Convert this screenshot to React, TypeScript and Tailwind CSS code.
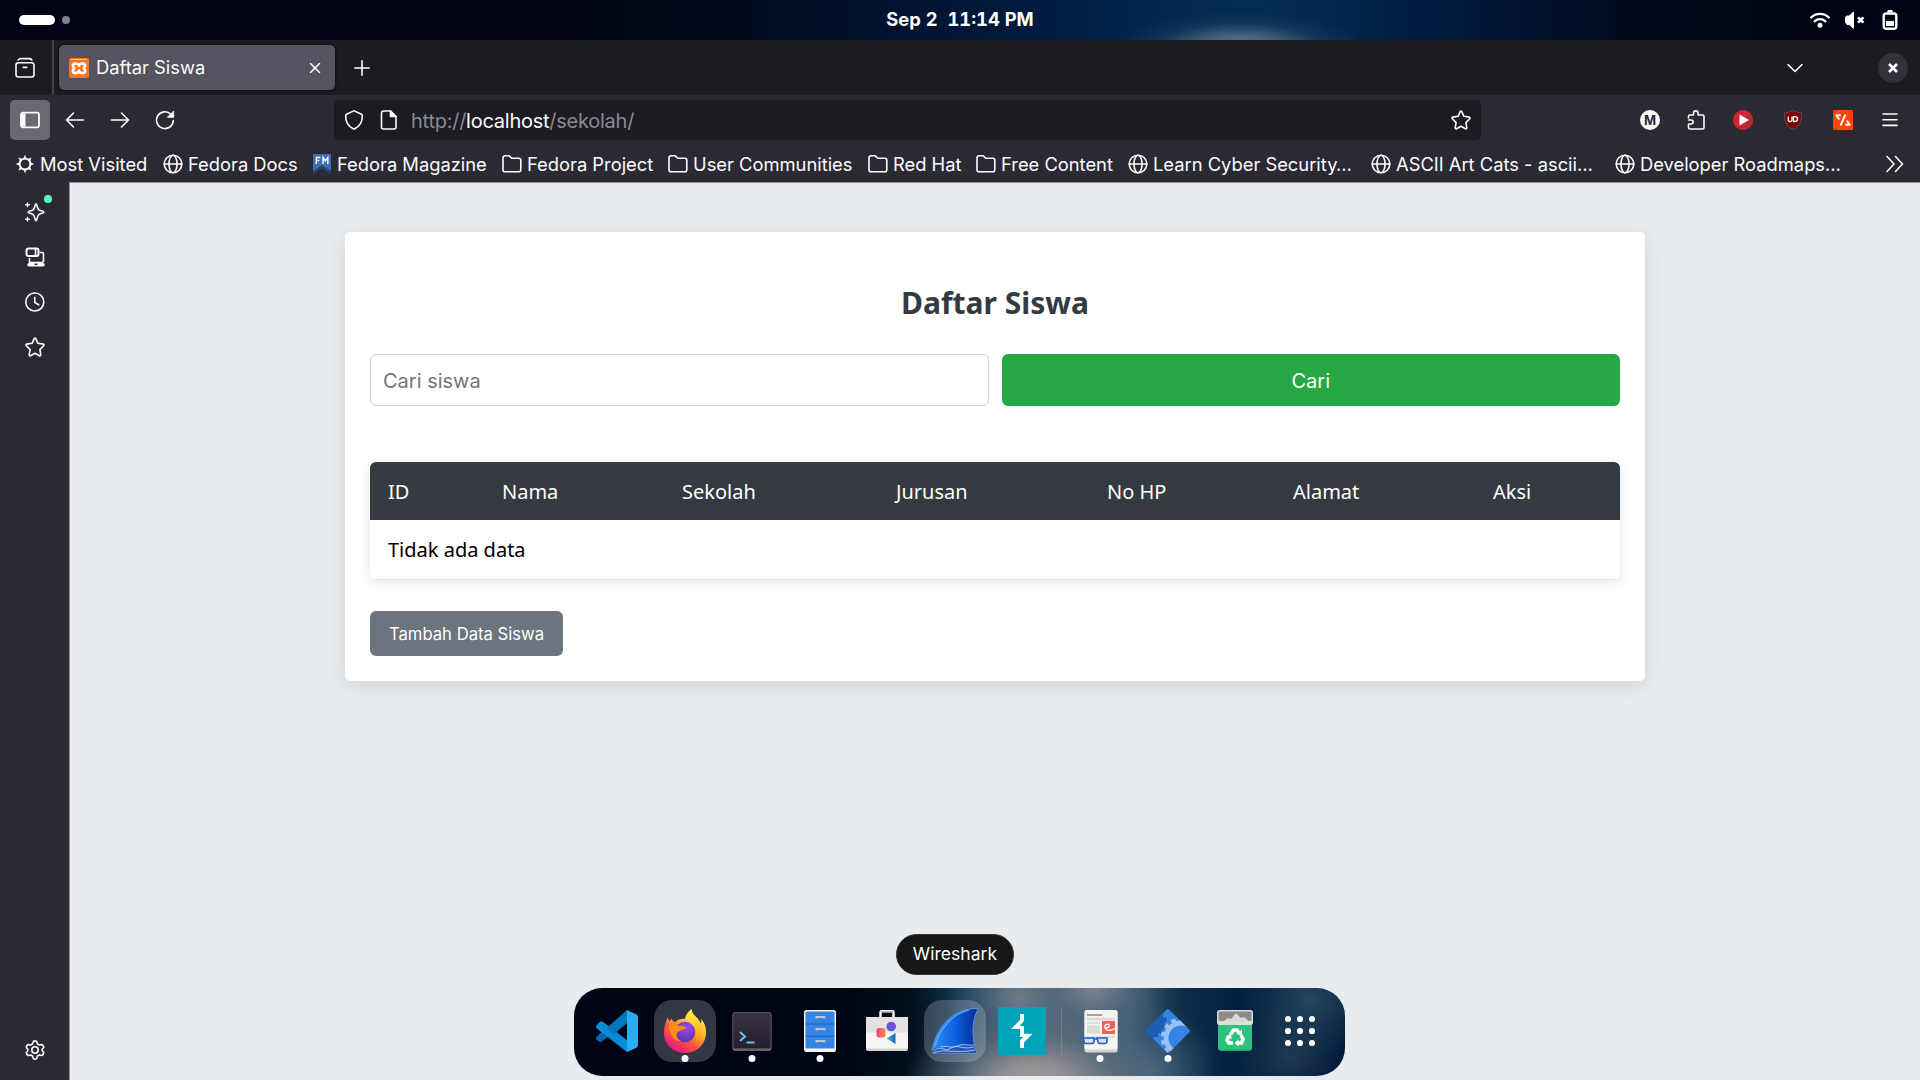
import React from "react";

type P = { children?: React.ReactNode; className?: string; vb?: string };

function Svg({ children, className = "size-5", vb = "0 0 20 20" }: P) {
  return (
    <svg viewBox={vb} className={"block shrink-0 overflow-visible " + className} fill="none" stroke="currentColor" strokeWidth="1.6" strokeLinecap="round" strokeLinejoin="round">
      {children}
    </svg>
  );
}

const starPath = "M9.2 1.7Q10 .4 10.8 1.700L12.900 6.300 18.200 7.100Q19.500 7.600 18.700 8.700L14.900 12.600 15.800 17.700Q15.700 19.200 14.400 18.700L10 16.300 5.600 18.700Q4.300 19.200 4.200 17.700L5.100 12.600 1.300 8.700Q.5 7.600 1.800 7.100L7.100 6.300Z";

const Globe = () => (
  <Svg className="size-5">
    <circle cx="10" cy="10" r="8.8" />
    <ellipse cx="10" cy="10" rx="4" ry="8.8" />
    <path d="M1.2 10h17.6" />
  </Svg>
);
const Folder = () => (
  <Svg className="size-5">
    <path d="M3 1.8h4.2l2.4 2.4h7.2a2 2 0 0 1 2 2v9.6a2 2 0 0 1-2 2H3a2 2 0 0 1-2-2V3.8a2 2 0 0 1 2-2z" />
  </Svg>
);
const Burst = () => (
  <Svg className="size-5">
    <circle cx="10" cy="10" r="5.4" strokeWidth="1.900" />
    {[0, 45, 90, 135, 180, 225, 270, 315].map((a) => (
      <path key={a} d="M8.700 4.500 10 1.400l1.300 3.100z" fill="currentColor" strokeWidth=".6" transform={`rotate(${a} 10 10)`} />
    ))}
  </Svg>
);
const Magazine = () => (
  <svg viewBox="0 0 20 20" className="block size-5 shrink-0">
    <path d="M1 0h18v20l-9-6-9 6z" fill="#3c6eb4" />
    <path d="M1 20V17L10 11l9 6v3l-9-6z" fill="#294172" />
    <path d="M4.300 10V3.500h4M4.300 6.500h3M11 10V3.500l2.400 3.500 2.400-3.500V10" fill="none" stroke="#fff" strokeWidth="1.400" />
  </svg>
);

const bookmarks = [
  { t: "Most Visited", I: Burst, w: "w-[148px]" },
  { t: "Fedora Docs", I: Globe, w: "w-[149px]" },
  { t: "Fedora Magazine", I: Magazine, w: "w-[190px]" },
  { t: "Fedora Project", I: Folder, w: "w-[166px]" },
  { t: "User Communities", I: Folder, w: "w-[200px]" },
  { t: "Red Hat", I: Folder, w: "w-[108px]" },
  { t: "Free Content", I: Folder, w: "w-[152px]" },
  { t: "Learn Cyber Security…", I: Globe, w: "w-[243px]" },
  { t: "ASCII Art Cats - ascii…", I: Globe, w: "w-[244px]" },
  { t: "Developer Roadmaps…", I: Globe, w: "w-[268px]" },
];

function SystemBar() {
  return (
    <div className="grid h-10 grid-cols-3 items-center bg-[radial-gradient(ellipse_125px_34px_at_1240px_46px,#5a7590_0%,#46627e_30%,#1e426480_65%,#032d5200_100%),linear-gradient(90deg,#000414_0%,#000414_30%,#000a1d_38%,#001637_50%,#00244a_59%,#032d52_65%,#00264a_70%,#001637_77%,#000a1d_85%,#000414_94%)] text-white">
      <div className="flex items-center gap-[7px] pl-[19px]">
        <div className="h-2.5 w-9 rounded-full bg-white" />
        <div className="size-2 rounded-full bg-[#80828a]" />
      </div>
      <div className="-mt-0.5 whitespace-pre text-center text-[18.33px] font-bold tabular-nums leading-[38px]">Sep 2  11:14 PM</div>
      <div className="flex items-center justify-end gap-[15px] pr-5">
        <Svg>
          <path d="M1.2 7.5a12.7 12.7 0 0 1 17.6 0M4.6 11.3a7.8 7.8 0 0 1 10.8 0" strokeWidth="2.3" />
          <circle cx="10" cy="15.3" r="2.5" fill="currentColor" stroke="none" />
        </Svg>
        <Svg>
          <path d="M2 6h2.200L8.500 2v16.500l-4.300-4H2L.5 12.500v-5z" fill="currentColor" strokeWidth="1" />
          <path d="m13 7.300 5.400 5.400m0-5.400-5.400 5.400" strokeWidth="2.600" strokeLinecap="butt" />
        </Svg>
        <Svg>
          <rect x="3.700" y="3.500" width="12.600" height="15.300" rx="2.500" strokeWidth="2.400" />
          <path d="M8.500 1.200h3" strokeWidth="2.400" />
          <rect x="6" y="11" width="8" height="5" fill="currentColor" stroke="none" />
        </Svg>
      </div>
    </div>
  );
}

function TabBar() {
  return (
    <div className="flex h-[55px] items-center bg-[#1c1b22]">
      <div className="flex h-full w-[54px] items-center border-r-2 border-[#44434b] pl-[15px]">
        <Svg>
          <rect x="1" y="4.700" width="18" height="14.300" rx="2.400" />
          <path d="M3.300 1.900C3.800 1 4.500.700 5.500.700h9c1 0 1.700.3 2.200 1.200M8.300 9.300h3.400" strokeWidth="1.800" />
        </Svg>
      </div>
      <div className="ml-[5px] flex h-[45px] w-[276px] items-center rounded-[5px] bg-[#55535f] pl-2.5 pr-[14px] shadow-[0_0_3px_#000]">
        <svg viewBox="0 0 20 20" className="size-5">
          <rect width="20" height="20" rx="2" fill="#f37623" />
          <path d="M2 1.500h16" stroke="#fbbf8c" strokeWidth="1" />
          <g fill="none" stroke="#fff" strokeWidth="2.600" strokeLinejoin="round" strokeLinecap="round">
            <path d="M10 7.600C9 4.800 3.800 4.600 3.800 7.600c0 1.400 1.500 2 1.500 2.600s-1.500 1.300-1.500 2.700c0 3.200 5.200 2.700 6.200-.1 1 2.800 6.200 3.300 6.200.1 0-1.400-1.500-2.100-1.500-2.700s1.500-1.200 1.500-2.600c0-3-5.200-2.800-6.200 0z" />
          </g>
        </svg>
        <span className="ml-[7px] flex-1 text-[18.33px] text-[#fbfbfe]">Daftar Siswa</span>
        <Svg className="size-3 text-[#fbfbfe]" vb="0 0 12 12">
          <path d="m1.500 1.500 9 9m0-9-9 9" />
        </Svg>
      </div>
      <Svg className="ml-[19px] mt-px size-4 text-[#fbfbfe]" vb="0 0 16 16">
        <path d="M8 .800v14.400M.800 8h14.400" />
      </Svg>
      <div className="flex-1" />
      <Svg className="mr-[75px] size-4" vb="0 0 16 16">
        <path d="m1 4.500 7 7 7-7" />
      </Svg>
      <div className="mr-[12px] flex size-[30px] items-center justify-center rounded-full bg-[#33323a]">
        <Svg className="size-[10px] text-white" vb="0 0 10 10">
          <path d="m1 1 8 8m0-8-8 8" strokeWidth="2.700" strokeLinecap="butt" />
        </Svg>
      </div>
    </div>
  );
}

function Toolbar() {
  return (
    <div className="flex h-[50px] items-center pl-2.5 pr-5">
      <div className="flex size-10 items-center justify-center rounded-[5px] bg-[#6a6972]">
        <Svg>
          <rect x="1" y="2.700" width="18" height="14.600" rx="2" strokeWidth="1.800" />
          <path d="M1 3.500h4.500v13H1z" fill="currentColor" stroke="none" />
        </Svg>
      </div>
      <Svg className="ml-[15px] size-5">
        <path d="M18.500 10H1.500M8.500 3l-7 7 7 7" />
      </Svg>
      <Svg className="ml-[25px] size-5">
        <path d="M1.500 10h17M11.500 3l7 7-7 7" />
      </Svg>
      <Svg className="ml-[25px] size-5">
        <path d="M18.300 10.500A8.400 8.400 0 1 1 15.800 4.200" />
        <path d="M18.600 1.500v5.700h-5.700z" fill="currentColor" strokeWidth="1" />
      </Svg>
      <div className="ml-[159px] flex h-10 w-[1147px] items-center rounded-[5px] bg-[#1c1b22] px-2.5">
        <Svg>
          <path d="M9.200 1.100Q10 .700 10.800 1.100L17.400 4.300Q18.200 4.700 18.300 5.600C18.500 11.500 16 16 10.800 18.700Q10 19.200 9.200 18.700C4 16 1.500 11.500 1.700 5.600Q1.800 4.700 2.600 4.300Z" />
        </Svg>
        <Svg className="ml-[15px] size-5">
          <path d="M4.500 1h7L17 6.500v10.500a2 2 0 0 1-2 2H4.500a2 2 0 0 1-2-2V3a2 2 0 0 1 2-2z" />
          <path d="M11.500 1v5.500H17z" fill="currentColor" />
        </Svg>
        <div className="ml-3 mt-px flex-1 text-[20px] tracking-[-0.25px] text-[#8b8a91]">
          http://<span className="text-[#fbfbfe]">localhost</span>/sekolah/
        </div>
        <Svg>
          <path d={starPath} />
        </Svg>
      </div>
      <div className="flex-1" />
      <div className="mr-[26px] flex size-5 items-center justify-center rounded-full bg-[#fbfbfe] text-[13px] font-bold leading-none text-[#2b2a33]">M</div>
      <Svg className="mr-[27px] size-5">
        <path d="M2.500 8V6.500A1.500 1.500 0 0 1 4 5h3.500V3.200a2.300 2.300 0 0 1 4.600 0V5h4.400A1.500 1.500 0 0 1 18 6.500v11a1.500 1.500 0 0 1-1.500 1.500H4a1.500 1.500 0 0 1-1.500-1.500V14h2.600a2 2 0 0 0 0-4H2.500" />
      </Svg>
      <svg viewBox="0 0 20 20" className="mr-[30px] size-5">
        <circle cx="10" cy="10" r="10" fill="#d92231" />
        <path d="M3 17a10 10 0 0 0 14-14z" fill="#b8262f" />
        <path d="M6.500 4.500v11L16 10z" fill="#fff" />
      </svg>
      <svg viewBox="0 0 20 20" className="mr-[30px] size-5">
        <path d="M10 .5c3 1.700 5.500 2.200 8.500 2.300 0 8-.5 12.200-8.500 16.700C2 15 1.500 10.800 1.500 2.800 4.500 2.700 7 2.200 10 .5z" fill="#800000" stroke="#68636c" strokeWidth=".7" />
        <path d="M5.200 6.500v3.300c0 2.400 3.800 2.400 3.800 0V6.500M9 9.800" fill="none" stroke="#fff" strokeWidth="1.300" />
        <path d="M10.500 6.700h1.500c3.400 0 3.400 4.800 0 4.800h-1.500z" fill="none" stroke="#fff" strokeWidth="1.300" />
      </svg>
      <svg viewBox="0 0 20 20" className="mr-[27px] size-5">
        <rect width="20" height="20" rx="1.500" fill="#ff4500" />
        <path d="M7.800 5.200H3.200l3.100 4.300M12.500 4.500 7.500 15.500M12.200 14.800h4.600l-3.100-4.300" fill="none" stroke="#fff" strokeWidth="1.900" strokeLinejoin="round" />
      </svg>
      <Svg className="size-5">
        <path d="M3 4h14M3 9.700h14M3 15.400h14" />
      </Svg>
    </div>
  );
}

function Bookmarks() {
  return (
    <div className="flex h-[37px] items-center pl-[15px]">
      {bookmarks.map(({ t, I, w }) => (
        <div key={t} className={"flex shrink-0 items-center gap-[5px] whitespace-nowrap text-[18.33px] leading-6 " + w}>
          <I />
          <span>{t}</span>
        </div>
      ))}
      <Svg className="ml-[2px] size-5">
        <path d="m2 2.500 7 7.500-7 7.500M10.500 2.500l7 7.500-7 7.500" />
      </Svg>
    </div>
  );
}

function Sidebar() {
  return (
    <aside className="flex w-[69px] flex-col items-center gap-[25px] bg-[#2b2a33] pb-5 pt-5">
      <div className="relative">
        <Svg>
          <path d="M11 1.800c1.200 0 1.100 5.200 3 6.200 4 1.500 4.800 1.300 4.800 2.200s-.8.700-4.800 2.200c-1.900 1-1.800 6.200-3 6.200s-1.100-5.200-3-6.200c-4-1.500-4.800-1.300-4.800-2.200s.8-.700 4.800-2.200c1.900-1 1.800-6.200 3-6.200z" />
          <path d="M2.500 .9v3.600M.7 2.700h3.600M2.500 15.500v3.600M.7 17.300h3.600" strokeWidth="1.400" />
        </Svg>
        <div className="absolute -top-[7px] left-[19px] size-2 rounded-full bg-[#54ffbd]" />
      </div>
      <Svg>
        <rect x="1.500" y="1.500" width="12" height="7.500" rx="2" strokeWidth="2" />
        <path d="M10.500 2v7M15.500 5.500H17a1.500 1.500 0 0 1 1.500 1.500v7l-1 1.500M4.500 11.500v4h13" />
        <path d="M4 17.800h14" strokeWidth="3.500" />
        <path d="M9.500 17.300h3" stroke="#2b2a33" strokeWidth="1.500" strokeLinecap="butt" />
      </Svg>
      <Svg>
        <circle cx="9.800" cy="10" r="9" />
        <path d="M9.800 5.500v5l3.900 2.300" />
      </Svg>
      <Svg>
        <path d={starPath} />
      </Svg>
      <div className="flex-1" />
      <Svg>
        <circle cx="10" cy="10" r="3.200" />
        <path d="M8.200 1.700Q10 .2 11.800 1.700L12.500 4 14.300 5 16.700 4.500Q18.800 5.400 18.700 7.500L17.200 9.200V10.800L18.700 12.500Q18.800 14.600 16.700 15.500L14.300 15 12.500 16 11.800 18.300Q10 19.800 8.200 18.300L7.500 16 5.700 15 3.300 15.500Q1.200 14.600 1.300 12.500L2.800 10.800V9.200L1.300 7.500Q1.200 5.400 3.300 4.500L5.700 5 7.500 4z" />
      </Svg>
    </aside>
  );
}

function StudentPage() {
  return (
    <main className="flex flex-1 flex-col items-center border-l border-t border-[#8f8f96] bg-[#e8ecef] pt-[49px] font-['Noto_Sans',sans-serif]">
      <section className="h-[449px] w-[1300px] rounded-[5px] bg-white px-[25px] shadow-[0_5px_19px_rgba(0,0,0,0.1)]">
        <h1 className="pt-[50px] text-center text-[30px] font-bold leading-[41px] text-[#343a40]">Daftar Siswa</h1>
        <div className="mt-[31px] grid grid-cols-2 gap-[13px] font-['Inter',sans-serif] text-[20px]">
          <div className="flex h-[52px] items-center rounded-[6px] border border-[#ced4da] px-3 pt-0.5 text-[#757575]">Cari siswa</div>
          <button className="h-[52px] rounded-[6px] bg-[#28a745] pt-0.5 text-white">Cari</button>
        </div>
        <div className="mt-14 overflow-hidden rounded-[6px] text-[20px] shadow-[0_2px_12px_rgba(0,0,0,0.1)]">
          <div className="flex h-[58px] items-center bg-[#343a40] pl-[18px] pt-0.5 text-white">
            <span className="w-[114px]">ID</span>
            <span className="w-[180px]">Nama</span>
            <span className="w-[214px]">Sekolah</span>
            <span className="w-[211px]">Jurusan</span>
            <span className="w-[186px]">No HP</span>
            <span className="w-[200px]">Alamat</span>
            <span>Aksi</span>
          </div>
          <div className="flex h-[60px] items-center border-b border-[#dee2e6] pl-[18px] pt-px text-black">Tidak ada data</div>
        </div>
        <button className="mt-[31px] h-[45px] w-[193px] rounded-[6px] bg-[#6c757d] pt-0.5 font-['Inter',sans-serif] text-[16.67px] text-white">Tambah Data Siswa</button>
      </section>
    </main>
  );
}

const VSCode = () => (
  <svg viewBox="0 0 42 42" className="size-[42px]">
    <path d="M31 0v12L5 32.200 0 29.500c-.6-1-.3-2 .4-2.700z" fill="#0068ae" />
    <path d="M.4 15.500 4.500 11.500h2L31 30v12L.4 18.300c-.8-.8-.8-2 0-2.800z" fill="#0a8ad8" />
    <path d="M31 0 11 19l7 5.500L31 13z" fill="#0076bd" />
    <path d="m31 0 9.500 4.500L42 6v30l-1.500 1.700L31 42z" fill="#29aef5" />
  </svg>
);
const Firefox = () => (
  <svg viewBox="0 0 44 44" className="size-11">
    <defs>
      <linearGradient id="ff1" x1=".8" y1=".1" x2=".25" y2=".95">
        <stop offset="0" stopColor="#fff44f" />
        <stop offset=".35" stopColor="#ffb02e" />
        <stop offset=".65" stopColor="#ff563d" />
        <stop offset="1" stopColor="#e31587" />
      </linearGradient>
      <radialGradient id="ff2" cx=".6" cy=".3" r=".7">
        <stop offset="0" stopColor="#a545ef" />
        <stop offset="1" stopColor="#5539a8" />
      </radialGradient>
      <linearGradient id="ff3" x1="0" y1="0" x2="0" y2="1">
        <stop offset="0" stopColor="#fff44f" />
        <stop offset="1" stopColor="#ff980e" />
      </linearGradient>
    </defs>
    <path d="M5 8c0 2 .5 3 1.500 4L9 9.500c0 2 1 3 3 3.500 3-3 7-4 11-3 1-4 3-7 5.500-9.500.5 5 4 7 6.500 10l3 4c.5-2 .5-3 0-5 4 5 5.500 10 5 15.500C42 37 33 44 22 44 10 44 1 35 1 24c0-6 1.500-11 4-16z" fill="url(#ff1)" />
    <circle cx="22" cy="23" r="10.300" fill="url(#ff2)" />
    <path d="M22 9.500c1-4 3-7 6.500-9.500.5 5 4 7 6.500 10 5 6 5 18-2 23 2-8 0-15-5-19-2-2-4-2-6-4.500z" fill="url(#ff3)" />
    <path d="M6 17c4-3 7-2 10 0 3-.5 6 .5 7 2-2 2-6 2-8 4-3 2-1 7 3 9-6 1-11-5-12-15z" fill="#ff8a18" />
  </svg>
);
const Terminal = () => (
  <svg viewBox="0 0 42 42" className="size-[42px]">
    <defs><linearGradient id="term" x2="0" y2="1"><stop stopColor="#38323f" /><stop offset="1" stopColor="#251e30" /></linearGradient></defs>
    <rect x="1.500" y="2" width="39" height="39" rx="3" fill="#66606a" />
    <rect x="2" y="2.500" width="38" height="36" rx="2.500" fill="url(#term)" stroke="#524c58" />
    <path d="m9 22 5 4.500L9 31M15.500 32.500h8" fill="none" stroke="#5bc8e8" strokeWidth="2" />
  </svg>
);
const Files = () => (
  <svg viewBox="0 0 42 42" className="size-[42px]">
    <rect x="5" y="0" width="32" height="42" rx="2.500" fill="#f6f5f4" />
    <rect x="6.500" y="1.500" width="29" height="37" rx="1" fill="#3584e4" />
    <path d="M6.500 14h29M6.500 26.200h29" stroke="#1c62bd" />
    <path d="M17.500 8.500V7h8v1.500M17.500 20.500V19h8v1.500M17.500 32.500V31h8v1.500" stroke="#c0c6ce" strokeWidth="2" fill="none" />
  </svg>
);
const Software = () => (
  <svg viewBox="0 0 42 42" className="size-[42px]">
    <defs>
      <linearGradient id="s1"><stop stopColor="#ed417b" /><stop offset="1" stopColor="#ff8a49" /></linearGradient>
      <linearGradient id="s2" x2="0" y2="1"><stop stopColor="#8b48d6" /><stop offset="1" stopColor="#4a5fe5" /></linearGradient>
      <linearGradient id="s3"><stop stopColor="#2fd1a3" /><stop offset="1" stopColor="#2358cc" /></linearGradient>
    </defs>
    <path d="M14.500 9V2.500q0-1.500 1.500-1.500h10q1.500 0 1.500 1.500V9" fill="none" stroke="#f2f1ef" strokeWidth="2.500" />
    <path d="M15 2h12" stroke="#aaa69f" strokeWidth="1.500" />
    <rect y="7" width="42" height="34" rx="2" fill="#d5d3cf" />
    <rect y="7" width="42" height="31.500" rx="1.500" fill="#f6f5f4" />
    <path d="M0 7h42v15.500H0z" fill="#e3e2df" />
    <rect x="10.500" y="18" width="9" height="9.500" rx="2.500" fill="url(#s1)" />
    <circle cx="25.200" cy="16.500" r="4.800" fill="url(#s2)" />
    <path d="M29.500 23v11L20.500 28.500z" fill="url(#s3)" />
  </svg>
);
const Wireshark = () => (
  <svg viewBox="0 0 46 46" className="size-[46px]">
    <defs><linearGradient id="ws"><stop stopColor="#2f8df5" /><stop offset=".5" stopColor="#0b62e0" /><stop offset="1" stopColor="#062a92" /></linearGradient></defs>
    <path d="M0 45C3 20 20 0 46 .5 39 15 40 30 44.500 45z" fill="url(#ws)" stroke="#60a6f0" strokeWidth=".8" />
    <path d="M3 38C8 20 20 6 37 2" fill="none" stroke="#79b8ff" strokeWidth="1.500" opacity=".7" />
    <path d="M0 45c1-5 6-7 12-5 8-4 12 1 17-3 6 2 10 1 13 2l2.500 6z" fill="#2855b8" />
    <path d="M2 43c7-7 11 2 17-3 7-4 11 2 23-1M1 45c12-5 22 1 42-3M9 39c7-2 9 2 16-1s9 0 17-1" fill="none" stroke="#c4dbfb" strokeWidth=".8" />
  </svg>
);
const Burp = () => (
  <svg viewBox="0 0 48 48" className="size-12">
    <rect width="48" height="48" fill="#00a3ba" />
    <path d="M22 7h4v7l-4.500 5H26v7.700h8.700L26 35.500V41h-4v-8l3.500-3H22v-8h-9l9-9z" fill="#fff" />
  </svg>
);
const Reader = () => (
  <svg viewBox="0 0 42 42" className="size-[42px] overflow-visible">
    <rect x="5.500" width="33" height="42.500" rx="2.500" fill="#d6d4d0" />
    <rect x="5.500" width="33" height="39.500" rx="2.500" fill="#f6f5f4" />
    <path d="M8 5h15" stroke="#6d6b68" strokeWidth="1.200" />
    <path d="M8 7.500h28v3H8zM8 12h13v2H8zM8 15.500h13v8H8zM8 26h28v2H8z" fill="#dddcd9" />
    <rect x="23" y="11" width="13" height="13" fill="#f66151" />
    <path d="M26 18c3 0 5-1 4-3s-5 0-4 3 5 3 10 .500" fill="none" stroke="#fff" strokeWidth="1.200" />
    <path d="M4 28h11v3.500q0 2-2 2H7q-2 0-2-2zM18 28h10v3.500q0 2-2 2h-5q-2 0-2-2zM15 29h3" fill="#b5d0ef" fillOpacity=".5" stroke="#1a5fb4" strokeWidth="1.600" />
  </svg>
);
const Gears = () => (
  <svg viewBox="0 0 46 46" className="size-[46px]">
    <defs><clipPath id="dm"><rect x="7" y="7" width="32" height="32" rx="2" transform="rotate(45 23 23)" /></clipPath></defs>
    <g clipPath="url(#dm)">
      <rect width="46" height="46" fill="#3584e4" />
      <path d="M18 0v10l3-1 1 4-3 2 2 3-3 3-1 4h-4v4l-4 0-1 4L0 32V0z" fill="#1a5fb4" />
      <circle cx="36" cy="30" r="15" fill="none" stroke="#99c1f1" strokeWidth="5" />
      <circle cx="36" cy="30" r="18.500" fill="none" stroke="#99c1f1" strokeWidth="3.500" strokeDasharray="4.400 4.130" />
    </g>
  </svg>
);
const Trash = () => (
  <svg viewBox="0 0 42 42" className="size-[42px]">
    <path d="M4 10h34v28q0 3-3 3H7q-3 0-3-3z" fill="#26a269" />
    <path d="M4 10h34v27q0 2.500-3 2.500H7q-3 0-3-2.500z" fill="#2ec27e" />
    <rect x="3" y="0" width="36" height="15" rx="2.500" fill="#deddda" />
    <rect x="4.500" y="1.500" width="33" height="9.500" rx="1" fill="#8d8b87" />
    <path d="m10 11 4-3 3 1 5-6 5 5 3-1 5 4z" fill="#d8d7d4" />
    <g fill="none" stroke="#fff" strokeWidth="3.600">
      <path d="m16.500 24.500 3-4.500h3.500l2 3" />
      <path d="m27 25 2 4-1.500 4h-4.500" />
      <path d="M19 33h-4l-2-3 2-4" />
    </g>
    <path d="m22.500 24.500 5.500.5 0-5.500zM24.500 29.500v7l-4-3.500zM11.500 26.500l5-2.500 1.500 5z" fill="#fff" />
  </svg>
);
const Grid = () => (
  <svg viewBox="0 0 32 32" className="size-8" fill="#fff">
    {[4, 16, 28].map((y) => [4, 16, 28].map((x) => <circle key={`${x}-${y}`} cx={x} cy={y} r="3.100" />))}
  </svg>
);

function DockItem({ children, active, running, className = "w-[67.500px]" }: { children: React.ReactNode; active?: boolean; running?: boolean; className?: string }) {
  return (
    <div className={"relative flex h-[62px] shrink-0 items-center justify-center " + className}>
      <div className={"flex size-[62px] items-center justify-center rounded-[18px] " + (active ? "bg-white/20" : "")}>{children}</div>
      {running && <div className="absolute bottom-0 left-1/2 size-[7px] -translate-x-1/2 rounded-full bg-white" />}
    </div>
  );
}

function Dock() {
  return (
    <div className="absolute left-[574px] top-[988px] flex h-[88px] w-[771px] rounded-[28px] bg-[radial-gradient(ellipse_130px_75px_at_460px_95px,#a39a9b_0%,#948e93_25%,#6b757f80_65%,#38597000_100%),radial-gradient(ellipse_75px_65px_at_520px_0px,#7b8391_0%,#5d6d8080_50%,#38597000_100%),radial-gradient(ellipse_75px_65px_at_445px_10px,#6d7b86_0%,#5d6d8080_50%,#38597000_100%),radial-gradient(ellipse_70px_70px_at_575px_85px,#49647d_0%,#49647d00_100%),radial-gradient(ellipse_70px_60px_at_735px_12px,#26455f_0%,#26455f00_100%),radial-gradient(ellipse_60px_50px_at_715px_68px,#203852_0%,#20385200_100%),linear-gradient(90deg,#000414_0%,#000514_36%,#03101e_44%,#123b5a_51%,#385970_60%,#385970_72%,#0c2c48_79%,#00203f_86%,#001637_100%)] pl-[9.500px] pt-3">
      <DockItem><VSCode /></DockItem>
      <DockItem active running><Firefox /></DockItem>
      <DockItem running><Terminal /></DockItem>
      <DockItem running><Files /></DockItem>
      <DockItem><Software /></DockItem>
      <DockItem active><Wireshark /></DockItem>
      <DockItem><Burp /></DockItem>
      <div className="ml-[5px] mr-[4.500px] mt-[7px] h-12 w-px shrink-0 bg-white/15" />
      <DockItem running><Reader /></DockItem>
      <DockItem running><Gears /></DockItem>
      <DockItem><Trash /></DockItem>
      <DockItem className="w-[62px]"><Grid /></DockItem>
    </div>
  );
}

export default function App() {
  return (
    <div className="relative flex h-[1080px] w-[1920px] flex-col overflow-hidden bg-[#2b2a33] font-['Inter',sans-serif] text-[#fbfbfe]">
      <SystemBar />
      <TabBar />
      <Toolbar />
      <Bookmarks />
      <div className="flex min-h-0 flex-1">
        <Sidebar />
        <StudentPage />
      </div>
      <div className="absolute left-[896px] top-[934px] flex h-[41px] w-[118px] items-center justify-center rounded-full border border-[#343434] bg-[#171717] text-[17.600px] text-white">Wireshark</div>
      <Dock />
    </div>
  );
}
